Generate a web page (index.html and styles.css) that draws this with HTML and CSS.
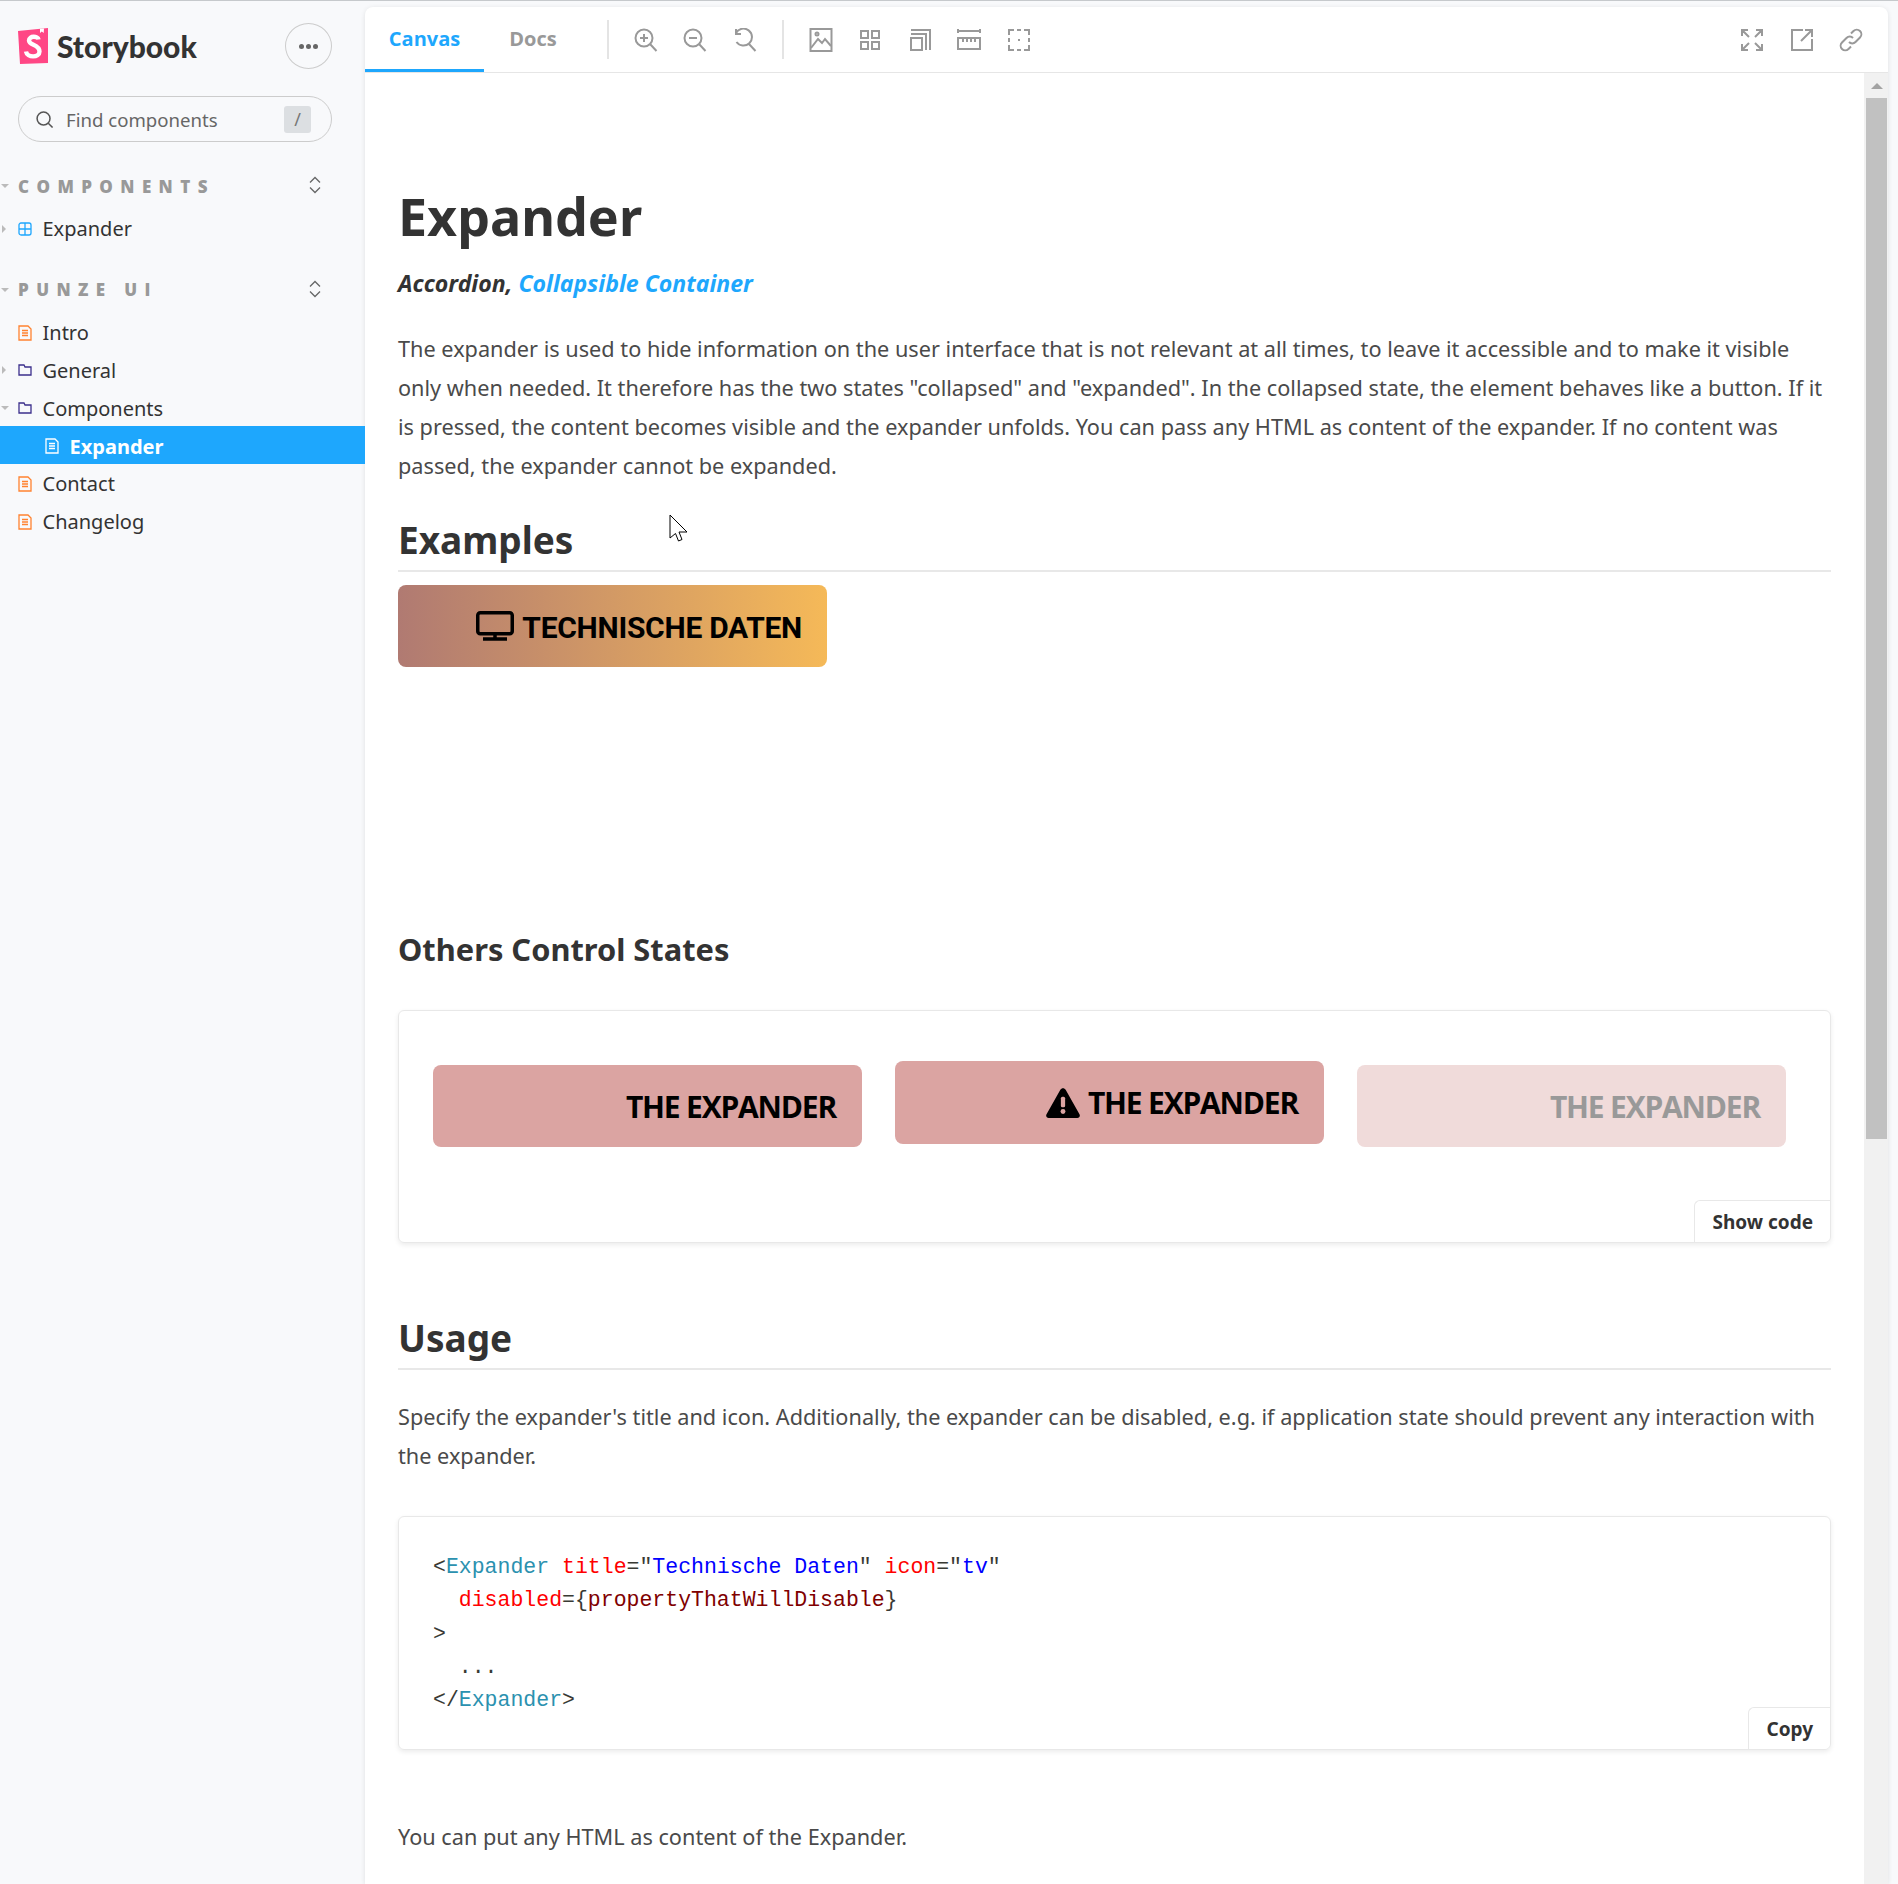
FILE: index.html
```html
<!DOCTYPE html>
<html lang="en">
<head>
  <meta charset="UTF-8">
  <title>Expander – Storybook</title>
  <link rel="stylesheet" href="styles.css">
</head>
<body>

  <aside class="sidebar">
    <div class="brand">
      <svg class="logo" viewBox="0 0 30 36">
        <path d="M0 3 L30 0 V35 L2 36 Z" fill="#ff4785"/>
        <path d="M22 0.7 L26 0.4 L25.7 5 L23.8 3.6 L22 5 Z" fill="#fff"/>
        <path d="M20.5 11.5 C20 8 11 7.5 11 12.5 C11 17.5 21.5 16 21.5 23.5 C21.5 30 9 30 8 23.5" fill="none" stroke="#fff" stroke-width="4.4"/>
      </svg>
      <span class="brand-name">Storybook</span>
      <button class="menu-btn"><span></span><span></span><span></span></button>
    </div>

    <div class="search">
      <svg class="search-icon" viewBox="0 0 20 20"><circle cx="9" cy="9" r="6.8"/><path d="M14 14 L18.5 18.5"/></svg>
      <span class="search-text">Find components</span>
      <span class="kbd">/</span>
    </div>

    <div class="section-head first">
      <i class="caret-down"></i><span class="section-name">Components</span>
      <svg class="updown" viewBox="0 0 12 18"><path d="M1 6.5 L6 1.5 L11 6.5 M1 11.5 L6 16.5 L11 11.5"/></svg>
    </div>
    <div class="row">
      <i class="caret-right"></i>
      <svg class="row-icon blue" viewBox="0 0 14 14"><rect x="1" y="1" width="12" height="12" rx="2"/><path d="M7 1 V13 M1 7 H13"/></svg>
      Expander
    </div>

    <div class="section-head">
      <i class="caret-down"></i><span class="section-name">Punze UI</span>
      <svg class="updown" viewBox="0 0 12 18"><path d="M1 6.5 L6 1.5 L11 6.5 M1 11.5 L6 16.5 L11 11.5"/></svg>
    </div>
    <div class="row">
      <svg class="row-icon orange" viewBox="0 0 14 16"><path d="M1 1 H10 L13 4 V15 H1 Z"/><path d="M4 5.5 H10 M4 8 H10 M4 10.5 H10"/></svg>
      Intro
    </div>
    <div class="row">
      <i class="caret-right"></i>
      <svg class="row-icon purple" viewBox="0 0 14 12"><path d="M1 1 H6 L7 3 H13 V11 H1 Z"/></svg>
      General
    </div>
    <div class="row">
      <i class="caret-down"></i>
      <svg class="row-icon purple" viewBox="0 0 14 12"><path d="M1 1 H6 L7 3 H13 V11 H1 Z"/></svg>
      Components
    </div>
    <div class="row selected">
      <svg class="row-icon white" viewBox="0 0 14 16"><path d="M1 1 H10 L13 4 V15 H1 Z"/><path d="M4 5.5 H10 M4 8 H10 M4 10.5 H10"/></svg>
      Expander
    </div>
    <div class="row">
      <svg class="row-icon orange" viewBox="0 0 14 16"><path d="M1 1 H10 L13 4 V15 H1 Z"/><path d="M4 5.5 H10 M4 8 H10 M4 10.5 H10"/></svg>
      Contact
    </div>
    <div class="row">
      <svg class="row-icon orange" viewBox="0 0 14 16"><path d="M1 1 H10 L13 4 V15 H1 Z"/><path d="M4 5.5 H10 M4 8 H10 M4 10.5 H10"/></svg>
      Changelog
    </div>
  </aside>

  <main class="panel">
    <div class="toolbar">
      <a class="tab active">Canvas</a>
      <a class="tab">Docs</a>
      <span class="divider"></span>
      <svg class="tool" viewBox="0 0 24 24"><circle cx="10" cy="10" r="8.5"/><path d="M16 16 L22.5 23 M10 6 V14 M6 10 H14"/></svg>
      <svg class="tool" viewBox="0 0 24 24"><circle cx="10" cy="10" r="8.5"/><path d="M16 16 L22.5 23 M6 10 H14"/></svg>
      <svg class="tool" viewBox="0 0 24 24"><path d="M3 5 A8.5 8.5 0 1 1 3.5 14 M3 1 V6 H8 M16 16 L22.5 23"/></svg>
      <span class="divider"></span>
      <svg class="tool" viewBox="0 0 24 24"><rect x="1.5" y="1" width="21" height="22"/><circle cx="8" cy="6" r="1.5"/><path d="M2 20 L9 11 L13 15 L16 11 L22 18"/></svg>
      <svg class="tool" viewBox="0 0 24 24"><rect x="3" y="3" width="7" height="7"/><rect x="14" y="3" width="7" height="7"/><rect x="3" y="14" width="7" height="7"/><rect x="14" y="14" width="7" height="7"/></svg>
      <svg class="tool" viewBox="0 0 24 24"><rect x="3" y="10" width="11" height="12"/><path d="M3 6 H18 V22 M3 2 H22 V22"/></svg>
      <svg class="tool" viewBox="0 0 24 24"><rect x="1" y="10" width="22" height="11"/><path d="M1 3 H23 M1 1 V5 M23 1 V5 M6 10 V14 M10 10 V14 M14 10 V14 M18 10 V14"/></svg>
      <svg class="tool" viewBox="0 0 24 24"><path d="M2 7 V2 H7 M10 2 H14 M17 2 H22 V7 M22 10 V14 M22 17 V22 H17 M14 22 H10 M7 22 H2 V17 M2 14 V10 M11 12 H13"/></svg>
      <span class="spacer"></span>
      <svg class="tool" viewBox="0 0 24 24"><path d="M2 8 V2 H8 M3 3 L9 9 M16 2 H22 V8 M21 3 L15 9 M2 16 V22 H8 M3 21 L9 15 M22 16 V22 H16 M21 21 L15 15"/></svg>
      <svg class="tool" viewBox="0 0 24 24"><path d="M13 2 H2 V22 H22 V11 M11 13 L22 2 M15 2 H22 V9"/></svg>
      <svg class="tool" viewBox="0 0 24 24"><path d="M10 14 A4.5 4.5 0 0 0 16.5 14 L21 9.5 A4.5 4.5 0 0 0 14.5 3 L12 5.5 M14 10 A4.5 4.5 0 0 0 7.5 10 L3 14.5 A4.5 4.5 0 0 0 9.5 21 L12 18.5"/></svg>
    </div>

    <div class="canvas-wrap">
      <div class="docs">
        <h1>Expander</h1>
        <p class="aliases">Accordion, <a>Collapsible Container</a></p>
        <p class="text first-text">The expander is used to hide information on the user interface that is not relevant at all times, to leave it accessible and to make it visible only when needed. It therefore has the two states "collapsed" and "expanded". In the collapsed state, the element behaves like a button. If it is pressed, the content becomes visible and the expander unfolds. You can pass any HTML as content of the expander. If no content was passed, the expander cannot be expanded.</p>

        <h2 class="examples">Examples</h2>
        <div class="expander gradient">
          <svg class="tv" viewBox="0 0 38 30"><rect x="1.75" y="1.75" width="34.5" height="21" rx="2.5"/><path d="M19 23 V27 M7 28 H31"/></svg>
          Technische Daten
        </div>

        <h3>Others Control States</h3>
        <div class="card states">
          <div class="expander plain pink">The Expander</div>
          <div class="expander plain pink raised">
            <svg class="warn" viewBox="0 0 32 28"><path d="M16 0 C17 0 18 .6 18.5 1.5 L31.5 24.5 C32.5 26.3 31.3 28 29.5 28 H2.5 C.7 28 -.5 26.3 .5 24.5 L13.5 1.5 C14 .6 15 0 16 0 Z"/><rect x="14" y="8" width="4" height="10" rx="1.5" fill="#dba4a2"/><circle cx="16" cy="22" r="2.3" fill="#dba4a2"/></svg>
            The Expander
          </div>
          <div class="expander plain pink-off">The Expander</div>
          <button class="corner-btn">Show code</button>
        </div>

        <h2 class="usage">Usage</h2>
        <p class="text usage-text">Specify the expander's title and icon. Additionally, the expander can be disabled, e.g. if application state should prevent any interaction with the expander.</p>

        <div class="card code-card">
<pre><span class="p">&lt;</span><span class="tag">Expander</span> <span class="attr">title</span><span class="p">="</span><span class="val">Technische Daten</span><span class="p">"</span> <span class="attr">icon</span><span class="p">="</span><span class="val">tv</span><span class="p">"</span>
  <span class="attr">disabled</span><span class="p">={</span><span class="prop">propertyThatWillDisable</span><span class="p">}</span>
<span class="p">&gt;</span>
<span class="p">  ...</span>
<span class="p">&lt;/</span><span class="tag">Expander</span><span class="p">&gt;</span></pre>
          <button class="corner-btn">Copy</button>
        </div>

        <p class="text last-text">You can put any HTML as content of the Expander.</p>
      </div>

      <div class="scrollbar">
        <i class="scroll-up"></i>
        <div class="thumb"></div>
      </div>
    </div>
  </main>

  <svg class="cursor" viewBox="0 0 20 29"><path d="M1 1 V24 L6.5 19.5 L9.5 27 L13 25.5 L10 18 L18 18 Z"/></svg>

</body>
</html>
```

FILE: styles.css
```css
* { box-sizing: border-box; }
html, body {
  height: 1884px;
  overflow: hidden;
}
body {
  margin: 0;
  display: flex;
  background: #f8f9fb;
  border-top: 1px solid #c6c9cc;
  font-family: 'Noto Sans', 'Open Sans', sans-serif;
  color: #333;
}

/* sidebar */
.sidebar {
  width: 365px;
  flex: none;
  padding-top: 22px;
  font-size: 20px;
}
.brand {
  display: flex;
  align-items: center;
  height: 46px;
  padding: 0 33px 0 18px;
}
.logo { width: 30px; height: 36px; }
.brand-name {
  margin-left: 9px;
  font-family: 'Lato', sans-serif;
  font-weight: 900;
  font-size: 30px;
  color: #333;
}
.menu-btn {
  margin-left: auto;
  width: 47px;
  height: 46px;
  border-radius: 50%;
  border: 1px solid #ccc;
  background: transparent;
  display: flex;
  justify-content: center;
  align-items: center;
  gap: 2px;
  padding: 0;
}
.menu-btn span {
  width: 5px;
  height: 5px;
  border-radius: 50%;
  background: #666;
}
.search {
  display: flex;
  align-items: center;
  margin: 27px 33px 0 18px;
  height: 46px;
  padding: 0 20px 0 16px;
  border: 1px solid #ccc;
  border-radius: 23px;
}
.search-icon {
  width: 19px;
  height: 19px;
  fill: none;
  stroke: #555;
  stroke-width: 1.6;
}
.search-text {
  margin-left: 12px;
  color: #666;
  font-size: 18.6px;
}
.kbd {
  margin-left: auto;
  width: 27px;
  height: 27px;
  background: #dcdfe2;
  border-radius: 3px;
  text-align: center;
  line-height: 27px;
  color: #777;
  font-size: 18px;
}
.section-head {
  position: relative;
  display: flex;
  align-items: center;
  height: 24px;
  margin: 31px 33px 0 0;
  padding-left: 18px;
}
.section-head.first { margin-top: 32px; }
.section-name {
  font-family: 'Open Sans', sans-serif;
  font-weight: 800;
  font-size: 17px;
  letter-spacing: 7.4px;
  text-transform: uppercase;
  color: #999;
}
.updown {
  margin: 0 11px 2px auto;
  width: 12px;
  height: 18px;
  fill: none;
  stroke: #666;
  stroke-width: 1.3;
}
.row {
  position: relative;
  display: flex;
  align-items: center;
  height: 37.8px;
  padding-top: 2px;
  padding-left: 18px;
  color: #333;
}
.section-head + .row { margin-top: 11px; }
.row.selected {
  background: #1ea7fd;
  color: #fff;
  font-weight: 700;
  padding-left: 45px;
}
.row-icon {
  flex: none;
  width: 14px;
  height: 16px;
  margin-right: 10.5px;
  fill: none;
  stroke-width: 1.3;
}
.row-icon.blue { stroke: #1ea7fd; }
.row-icon.orange { stroke: #ff8330; }
.row-icon.purple { stroke: #3b2f8c; }
.row-icon.white { stroke: #fff; }
.caret-down, .caret-right {
  position: absolute;
  left: 1px;
  width: 0;
  height: 0;
}
.caret-down {
  border-left: 4px solid transparent;
  border-right: 4px solid transparent;
  border-top: 4px solid #bbb;
}
.caret-right {
  left: 2px;
  border-top: 4px solid transparent;
  border-bottom: 4px solid transparent;
  border-left: 4px solid #bbb;
}

/* main panel */
.panel {
  flex: 1;
  min-width: 0;
  margin: 6px 10px 0 0;
  background: #fff;
  border-radius: 8px 8px 0 0;
  box-shadow: 0 1px 5px rgba(0, 0, 0, .1);
  display: flex;
  flex-direction: column;
  overflow: hidden;
}
.toolbar {
  height: 66px;
  flex: none;
  display: flex;
  align-items: center;
  padding-right: 25px;
  border-bottom: 1px solid #e6e6e6;
  gap: 25.5px;
}
.tab {
  align-self: stretch;
  width: 119px;
  display: flex;
  align-items: center;
  justify-content: center;
  margin-right: -25.5px;
  font-family: 'Open Sans', sans-serif;
  font-weight: 700;
  font-size: 20px;
  color: #999;
  border-bottom: 3px solid transparent;
}
.tab + .tab { width: 98px; }
.tab.active {
  color: #1ea7fd;
  border-bottom-color: #1ea7fd;
}
.divider {
  width: 2px;
  height: 39px;
  margin-right: -1px;
  background: #e4e4e4;
}
.tab + .divider { margin-left: 25px; }
.tool {
  width: 24px;
  height: 24px;
  fill: none;
  stroke: #999;
  stroke-width: 2;
}
.spacer { flex: 1; }
.canvas-wrap {
  flex: 1;
  display: flex;
  min-height: 0;
}
.docs {
  flex: 1;
  min-width: 0;
  padding: 113px 33px 0;
}
.scrollbar {
  flex: none;
  width: 24px;
  padding-left: 2px;
  padding-right: 1px;
  background: #f1f1f1;
}
.scroll-up {
  display: block;
  width: 0;
  height: 0;
  margin: 10px auto 9px;
  border-left: 6px solid transparent;
  border-right: 6px solid transparent;
  border-bottom: 6px solid #a3a3a3;
}
.thumb {
  height: 1041px;
  background: #c1c1c1;
}

/* content */
h1 {
  margin: 0;
  font-size: 52px;
  line-height: 60px;
  font-weight: 700;
}
.aliases {
  margin: 22px 0 0;
  font-size: 23.1px;
  line-height: 30px;
  font-weight: 700;
  font-style: italic;
}
.aliases a { color: #1ea7fd; }
.text {
  margin: 0;
  font-size: 21.7px;
  line-height: 39px;
  color: #4a4a4a;
}
.first-text { margin-top: 31px; }
h2 {
  margin: 0;
  font-size: 37px;
  line-height: 50px;
  font-weight: 700;
  border-bottom: 2px solid #e8e8e8;
}
.examples {
  margin-top: 30px;
  padding-bottom: 5px;
}
h3 {
  margin: 260px 0 0;
  font-size: 30.8px;
  line-height: 44px;
  font-weight: 700;
}
.usage {
  margin-top: 70px;
  padding-bottom: 5px;
}
.usage-text { margin-top: 27px; }
.last-text { margin-top: 67px; }
.expander {
  display: flex;
  align-items: center;
  justify-content: flex-end;
  width: 429px;
  height: 82px;
  padding-right: 25px;
  border-radius: 8px;
  color: #000;
  font-weight: 700;
  text-transform: uppercase;
}
.gradient {
  margin-top: 13px;
  padding-top: 2px;
  font-family: 'Roboto', sans-serif;
  font-size: 30px;
  letter-spacing: -.27px;
  background: linear-gradient(90deg, #b07a72 0%, #f5b958 100%);
}
.tv {
  width: 38px;
  height: 30px;
  margin: -2px 8px 0 0;
  fill: none;
  stroke: #000;
  stroke-width: 3.5;
}
.plain {
  padding-right: 26px;
  font-family: 'Open Sans', sans-serif;
  font-size: 30px;
  letter-spacing: -1.2px;
}
.warn {
  width: 34px;
  height: 30px;
  margin-right: 8px;
  fill: #000;
}
.pink { background: #dba4a2; }
.raised { margin-top: -4px; height: 83px; }
.pink-off {
  background: #f0dbda;
  color: #999;
}
.card {
  position: relative;
  margin-top: 39px;
  border: 1px solid #e8e8e8;
  border-radius: 6px;
  box-shadow: 0 2px 5px rgba(0, 0, 0, .08);
}
.states {
  display: flex;
  align-items: flex-start;
  gap: 33px;
  height: 233px;
  padding: 54px 34px;
}
.corner-btn {
  position: absolute;
  right: 0;
  bottom: 0;
  height: 42px;
  padding: 0 17px;
  background: #fff;
  border: 1px solid #e8e8e8;
  border-width: 1px 0 0 1px;
  border-radius: 6px 0 6px 0;
  font-family: 'Noto Sans', sans-serif;
  font-weight: 700;
  font-size: 19px;
  color: #333;
}
.code-card {
  margin-top: 41px;
  height: 234px;
  padding: 34px 34px;
}
pre {
  margin: 0;
  font-family: 'Liberation Mono', monospace;
  font-size: 21.5px;
  line-height: 33.3px;
}
.p { color: #393a34; }
.tag { color: #2b91af; }
.attr { color: #ff0000; }
.val { color: #0000ff; }
.prop { color: #800000; }

.cursor {
  position: absolute;
  left: 669px;
  top: 514px;
  width: 20px;
  height: 29px;
  fill: #fff;
  stroke: #000;
  stroke-width: 1;
}
```
